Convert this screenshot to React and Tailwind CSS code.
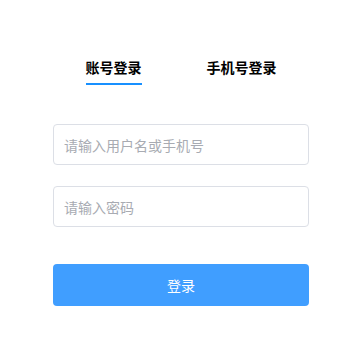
export default function App() {
  const font = { fontFamily: '"Noto Sans CJK SC", "Noto Sans", sans-serif' };
  return (
    <div className="w-[351px] h-[345px] bg-white" style={font}>
      <div className="pl-[53px] pt-[57px] w-[309px]">
        <div className="flex justify-around">
          <div className="flex flex-col items-center">
            <span className="text-[14px] leading-[20px] font-bold text-black">账号登录</span>
            <div className="mt-[6px] h-[2px] w-[56px] bg-[#1890ff]" />
          </div>
          <div className="flex flex-col items-center">
            <span className="text-[14px] leading-[20px] font-bold text-black">手机号登录</span>
            <div className="mt-[6px] h-[2px] w-[56px] bg-transparent" />
          </div>
        </div>
        <div className="mt-[39px] flex flex-col">
          <input
            placeholder="请输入用户名或手机号"
            className="h-[41px] w-[256px] rounded-[4px] border border-[#dcdfe6] px-[10px] text-[14px] outline-none placeholder:text-[#a8abb2]"
            style={font}
          />
          <input
            type="password"
            placeholder="请输入密码"
            className="mt-[21px] h-[41px] w-[256px] rounded-[4px] border border-[#dcdfe6] px-[10px] text-[14px] outline-none placeholder:text-[#a8abb2]"
            style={font}
          />
          <button
            className="mt-[37px] h-[42px] w-[256px] rounded-[4px] bg-[#409eff] text-[14px] text-white"
            style={font}
          >
            登录
          </button>
        </div>
      </div>
    </div>
  );
}
